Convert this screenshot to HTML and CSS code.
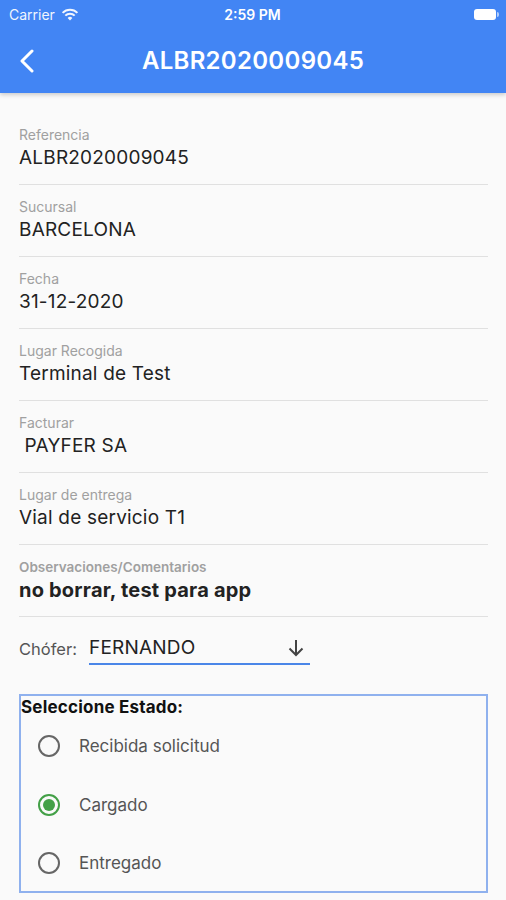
FILE: index.html
```html
<!DOCTYPE html>
<html lang="es">
<head>
    <meta charset="UTF-8">
    <meta name="viewport" content="width=device-width, initial-scale=1.0">
    <title>ALBR2020009045</title>
    <link rel="stylesheet" href="styles.css">
</head>
<body>
    <header class="appbar">
        <div class="statusbar">
            <span class="carrier">Carrier
                <svg class="wifi" width="18" height="13" viewBox="0 0 18 13">
                    <path d="M9 12.5 L6.6 9.9 A3.4 3.4 0 0 1 11.4 9.9 Z" fill="#fff"/>
                    <path d="M4.3 7.6 A6.6 6.6 0 0 1 13.7 7.6" stroke="#fff" stroke-width="2" fill="none"/>
                    <path d="M1.6 4.9 A10.4 10.4 0 0 1 16.4 4.9" stroke="#fff" stroke-width="2" fill="none"/>
                </svg>
            </span>
            <span class="clock">2:59 PM</span>
            <span class="battery"><span class="battery-level"></span></span>
        </div>
        <div class="toolbar">
            <svg class="back" width="16" height="24" viewBox="0 0 16 24">
                <path d="M13 2 L3 12 L13 22" stroke="#fff" stroke-width="3" fill="none" stroke-linecap="round" stroke-linejoin="round"/>
            </svg>
            <h1>ALBR2020009045</h1>
        </div>
    </header>

    <main class="content">
        <div class="field">
            <div class="field-label">Referencia</div>
            <div class="field-value">ALBR2020009045</div>
        </div>
        <div class="field">
            <div class="field-label">Sucursal</div>
            <div class="field-value">BARCELONA</div>
        </div>
        <div class="field">
            <div class="field-label">Fecha</div>
            <div class="field-value">31-12-2020</div>
        </div>
        <div class="field">
            <div class="field-label">Lugar Recogida</div>
            <div class="field-value">Terminal de Test</div>
        </div>
        <div class="field">
            <div class="field-label">Facturar</div>
            <div class="field-value">&nbsp;PAYFER SA</div>
        </div>
        <div class="field">
            <div class="field-label">Lugar de entrega</div>
            <div class="field-value">Vial de servicio T1</div>
        </div>
        <div class="field">
            <div class="field-label bold">Observaciones/Comentarios</div>
            <div class="field-value bold">no borrar, test para app</div>
        </div>

        <div class="driver">
            <span class="driver-label">Chófer:</span>
            <div class="select">
                <span>FERNANDO</span>
                <svg width="20" height="20" viewBox="0 0 20 20">
                    <path d="M10 2 V17 M3.5 10.5 L10 17 L16.5 10.5" stroke="#444" stroke-width="2" fill="none"/>
                </svg>
            </div>
        </div>

        <div class="status-box">
            <div class="status-title">Seleccione Estado:</div>
            <div class="radio-row">
                <span class="radio"></span>
                <span>Recibida solicitud</span>
            </div>
            <div class="radio-row">
                <span class="radio checked"></span>
                <span>Cargado</span>
            </div>
            <div class="radio-row">
                <span class="radio"></span>
                <span>Entregado</span>
            </div>
        </div>
    </main>
</body>
</html>
```

FILE: styles.css
```css
* {
    margin: 0;
    padding: 0;
    box-sizing: border-box;
}

body {
    background: #fafafa;
    font-family: Inter, "Noto Sans", sans-serif;
    color: #222;
    width: 506px;
    height: 900px;
    overflow: hidden;
}

.appbar {
    background: #4285f4;
    height: 93px;
    color: #fff;
    box-shadow: 0 2px 4px rgba(0, 0, 0, 0.18);
}

.statusbar {
    height: 28px;
    display: flex;
    align-items: center;
    justify-content: space-between;
    padding: 0 10px 0 9px;
    font-size: 14px;
}

.carrier {
    display: flex;
    align-items: center;
    gap: 6px;
    width: 100px;
    opacity: 0.92;
}

.clock {
    font-weight: 600;
}

.battery {
    width: 100px;
    display: flex;
    justify-content: flex-end;
}

.battery-level {
    width: 22px;
    height: 11px;
    background: #fff;
    border-radius: 3px;
    position: relative;
}

.battery-level::after {
    content: "";
    position: absolute;
    right: -3px;
    top: 3px;
    width: 2px;
    height: 5px;
    border-radius: 0 2px 2px 0;
    background: rgba(255, 255, 255, 0.6);
}

.toolbar {
    height: 65px;
    display: flex;
    align-items: center;
    padding-left: 19px;
}

.toolbar h1 {
    flex: 1;
    text-align: center;
    font-size: 24px;
    font-weight: 600;
    letter-spacing: 0.3px;
    margin-right: 35px;
}

.content {
    padding: 20px 18px 0 19px;
}

.field {
    height: 72px;
    border-bottom: 1.5px solid #e0e0e0;
    padding-top: 13px;
}

.field-label {
    font-size: 14px;
    color: #a0a0a0;
    line-height: 18px;
}

.field-value {
    font-size: 19px;
    letter-spacing: 0.2px;
    line-height: 28px;
    color: #222;
}

.field-label.bold {
    font-weight: 600;
    font-size: 13.5px;
}

.field-value.bold {
    font-weight: 700;
    font-size: 20px;
    letter-spacing: 0.2px;
}

.driver {
    display: flex;
    align-items: center;
    padding-top: 7px;
    height: 56px;
}

.driver-label {
    font-size: 16.5px;
    color: #555;
    width: 70px;
}

.select {
    width: 221px;
    height: 32px;
    display: flex;
    align-items: center;
    justify-content: space-between;
    padding-right: 4px;
    font-size: 19px;
    letter-spacing: 0.2px;
    border-bottom: 2px solid #4a86e8;
}

.status-box {
    margin-top: 21px;
    border: 2px solid #8fb1ee;
    height: 199px;
    padding-top: 1px;
}

.status-title {
    font-size: 17px;
    font-weight: 700;
    letter-spacing: 0.2px;
    color: #111;
    line-height: 20px;
}

.radio-row {
    display: flex;
    align-items: center;
    height: 58.5px;
    padding-left: 17px;
    gap: 19px;
    font-size: 17px;
    color: #555;
}

.radio {
    width: 22px;
    height: 22px;
    border: 2px solid #666;
    border-radius: 50%;
    position: relative;
}

.radio.checked {
    border-color: #43a047;
}

.radio.checked::after {
    content: "";
    position: absolute;
    left: 3px;
    top: 3px;
    width: 12px;
    height: 12px;
    border-radius: 50%;
    background: #43a047;
}
```
